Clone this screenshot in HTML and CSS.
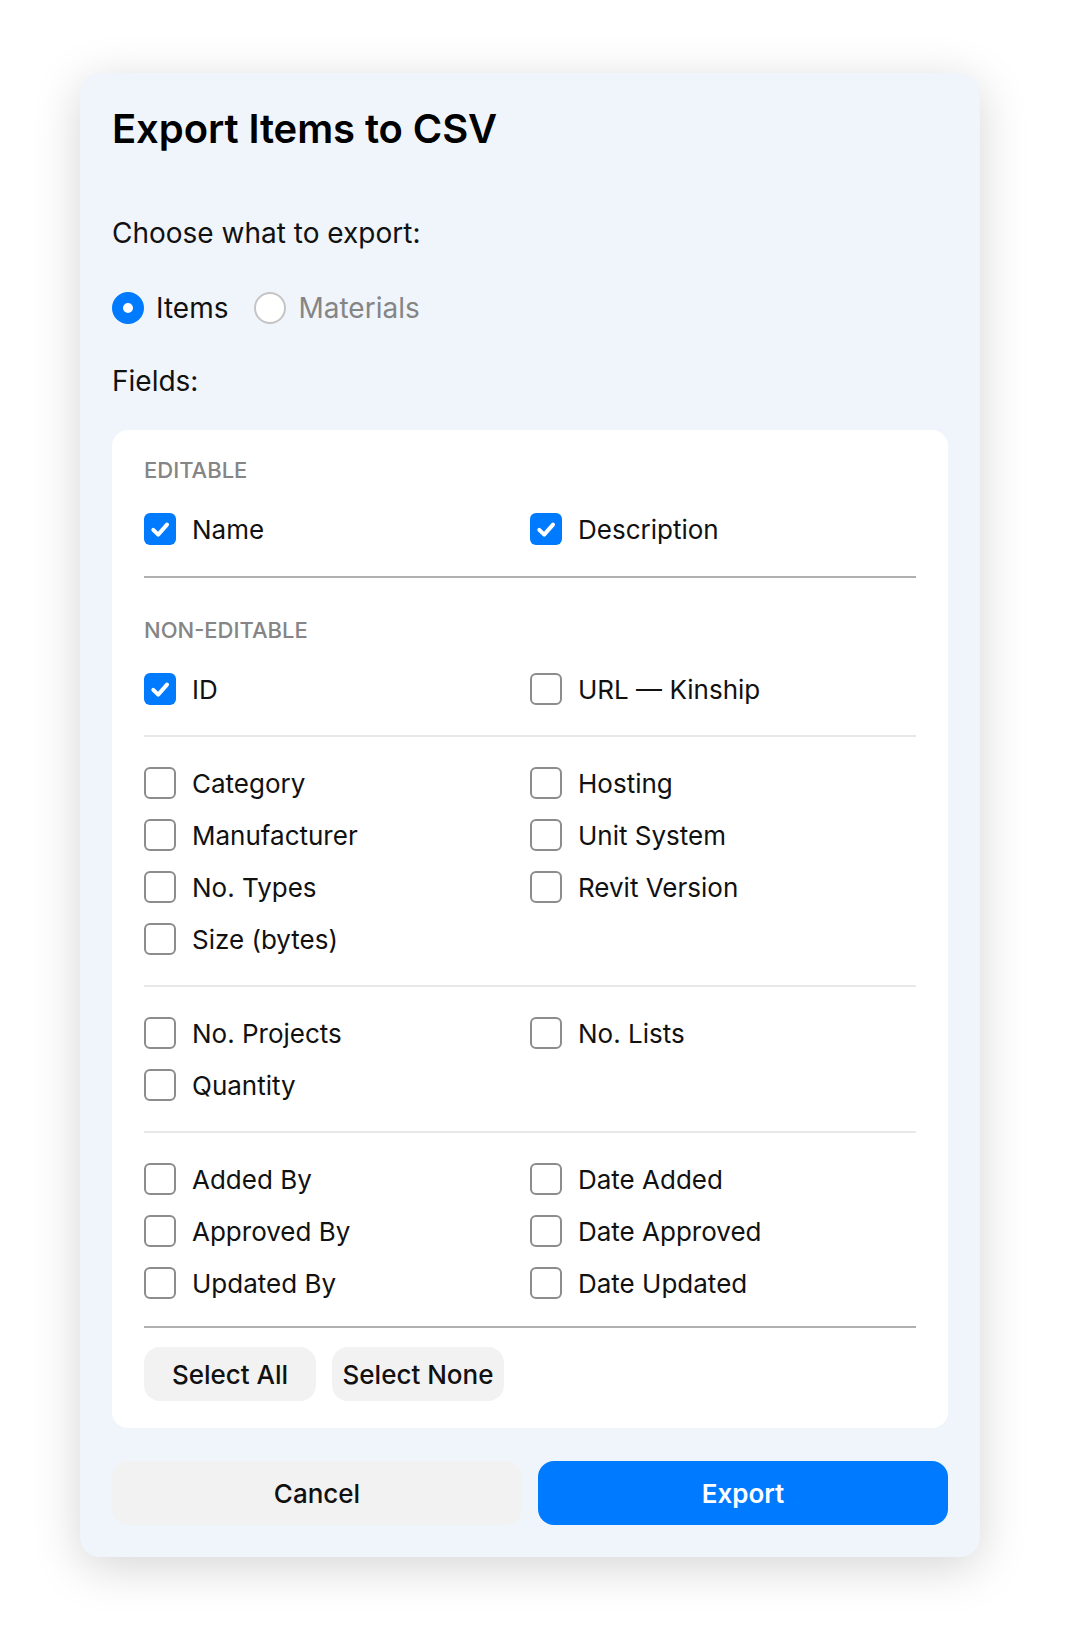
FILE: index.html
```html
<!DOCTYPE html>
<html lang="en">
<head>
    <meta charset="UTF-8">
    <meta name="viewport" content="width=device-width, initial-scale=1.0">
    <title>Export Items to CSV</title>
    <link rel="stylesheet" href="styles.css">
</head>
<body>
<div class="page">
    <div class="export-dialog">
        <h2>Export Items to CSV</h2>

        <p class="prompt">Choose what to export:</p>
        <div class="radio-row">
            <label class="radio checked"><span class="dot"></span>Items</label>
            <label class="radio muted"><span class="dot"></span>Materials</label>
        </div>

        <p class="fields-label">Fields:</p>

        <div class="fields">
            <!-- Editable fields -->
            <div class="group group-editable">
                <div class="group-label">EDITABLE</div>
                <div class="field-grid">
                    <label class="field"><span class="box checked"></span>Name</label>
                    <label class="field"><span class="box checked"></span>Description</label>
                </div>
            </div>

            <!-- Non-editable fields -->
            <div class="group group-fixed">
                <div class="group-label">NON-EDITABLE</div>
                <div class="field-grid">
                    <label class="field"><span class="box checked"></span>ID</label>
                    <label class="field"><span class="box"></span>URL — Kinship</label>
                </div>
                <div class="field-grid">
                    <label class="field"><span class="box"></span>Category</label>
                    <label class="field"><span class="box"></span>Hosting</label>
                    <label class="field"><span class="box"></span>Manufacturer</label>
                    <label class="field"><span class="box"></span>Unit System</label>
                    <label class="field"><span class="box"></span>No. Types</label>
                    <label class="field"><span class="box"></span>Revit Version</label>
                    <label class="field"><span class="box"></span>Size (bytes)</label>
                </div>
                <div class="field-grid">
                    <label class="field"><span class="box"></span>No. Projects</label>
                    <label class="field"><span class="box"></span>No. Lists</label>
                    <label class="field"><span class="box"></span>Quantity</label>
                </div>
                <div class="field-grid">
                    <label class="field"><span class="box"></span>Added By</label>
                    <label class="field"><span class="box"></span>Date Added</label>
                    <label class="field"><span class="box"></span>Approved By</label>
                    <label class="field"><span class="box"></span>Date Approved</label>
                    <label class="field"><span class="box"></span>Updated By</label>
                    <label class="field"><span class="box"></span>Date Updated</label>
                </div>
            </div>

            <div class="select-actions">
                <button class="select-btn">Select All</button>
                <button class="select-btn">Select None</button>
            </div>
        </div>

        <div class="dialog-actions">
            <button class="cancel-btn">Cancel</button>
            <button class="export-btn">Export</button>
        </div>
    </div>
</div>
</body>
</html>
```

FILE: styles.css
```css
body {
    margin: 0;
    background: #fff;
    font-family: Inter, "Noto Sans", sans-serif;
    color: #111;
}

.page {
    padding: 73px 90px 75px 80px;
}

.export-dialog {
    width: 900px;
    box-sizing: border-box;
    padding: 32px;
    background: #f0f5fc;
    border-radius: 20px;
    box-shadow: 0 10px 48px rgba(0, 0, 0, 0.17);
}

.export-dialog h2 {
    margin: 0;
    font-size: 40px;
    line-height: 48px;
    font-weight: 600;
    letter-spacing: -0.1px;
    color: #000;
}

.prompt, .fields-label {
    margin: 0;
    font-size: 28px;
    line-height: 32px;
}

.prompt {
    margin-top: 64px;
}

.radio-row {
    display: flex;
    gap: 26px;
    margin-top: 43px;
    height: 32px;
}

.radio {
    display: flex;
    align-items: center;
    gap: 12px;
    font-size: 28px;
    line-height: 32px;
}

.radio .dot {
    width: 32px;
    height: 32px;
    box-sizing: border-box;
    border-radius: 50%;
    border: 2px solid #c4c4c4;
    background: #fff;
}

.radio.checked .dot {
    border: 11px solid #007aff;
}

.radio.muted {
    color: #858585;
}

.fields-label {
    margin-top: 41px;
}

.fields {
    margin-top: 33px;
    padding: 28px 32px 27px;
    background: #fff;
    border-radius: 16px;
}

.group-label {
    font-size: 22px;
    line-height: 24px;
    font-weight: 500;
    color: #858585;
    margin-bottom: 21px;
}

.group-editable {
    padding-bottom: 21px;
}

.group-fixed {
    border-top: 2px solid #b0b0b0;
    padding-top: 40px;
    padding-bottom: 17px;
}

.field-grid {
    display: grid;
    grid-template-columns: 1fr 1fr;
    grid-auto-rows: 52px;
}

.field-grid + .field-grid {
    border-top: 2px solid #e8e8e8;
    margin-top: 20px;
    padding-top: 20px;
}

.field {
    display: flex;
    align-items: center;
    gap: 16px;
    font-size: 26px;
}

.box {
    width: 32px;
    height: 32px;
    box-sizing: border-box;
    border: 2px solid #8c8c8c;
    border-radius: 6px;
    flex-shrink: 0;
}

.box.checked {
    border: none;
    background: #007aff url("data:image/svg+xml,%3Csvg xmlns='http://www.w3.org/2000/svg' viewBox='0 0 32 32'%3E%3Cpath d='M9.3 16.9 L14.2 21.6 L23 11.6' fill='none' stroke='white' stroke-width='4' stroke-linecap='round' stroke-linejoin='round'/%3E%3C/svg%3E") center / 32px 32px no-repeat;
}

.select-actions {
    display: flex;
    gap: 16px;
    border-top: 2px solid #b0b0b0;
    padding-top: 19px;
}

.select-btn {
    width: 172px;
    height: 54px;
    border: none;
    border-radius: 16px;
    background: #f2f2f2;
    font-family: inherit;
    font-size: 26px;
    font-weight: 500;
    color: #111;
    padding: 0;
}

.dialog-actions {
    display: flex;
    gap: 16px;
    margin-top: 33px;
}

.dialog-actions button {
    flex: 1;
    height: 64px;
    border: none;
    border-radius: 16px;
    font-family: inherit;
    font-size: 26px;
}

.cancel-btn {
    background: #f2f2f2;
    color: #111;
    font-weight: 500;
}

.export-btn {
    background: #007aff;
    color: #fff;
    font-weight: 600;
}
```
